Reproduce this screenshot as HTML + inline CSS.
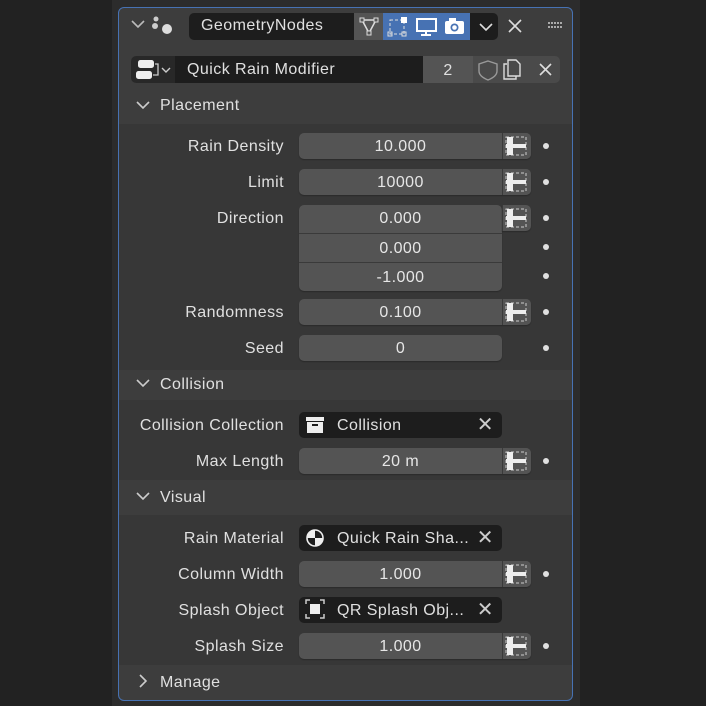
<!DOCTYPE html>
<html><head><style>
*{margin:0;padding:0;box-sizing:border-box}
body{width:706px;height:706px;background:#222;position:relative;overflow:hidden;font-family:"Liberation Sans","DejaVu Sans",sans-serif;font-size:16px;letter-spacing:0.45px;color:#e0e0e0}
.a{position:absolute}
.ed{left:112px;top:0;width:468px;height:706px;background:#2c2c2c}
.panel{left:118px;top:7px;width:455px;height:694px;background:#3d3d3d;border:1px solid #4772b3;border-radius:6px;overflow:hidden}
.body{background:#373737}
.lbl{text-align:right;width:190px;left:94px;color:#e0e0e0;margin-top:1px}
.fld{left:299px;width:232px;height:26px;background:#545454;border-radius:5px;text-align:center;line-height:28px;color:#e6e6e6;box-shadow:0 1px 1px #2a2a2a}
.fld span{display:block;width:203px}
.dec{position:absolute;left:203px;top:0;width:29px;height:26px;background:#545454;border-left:1px solid #3a3a3a;border-radius:0 5px 5px 0}
.dot{width:6px;height:6px;border-radius:3px;background:#e0e0e0;left:543px}
.obj{left:299px;width:203px;height:26px;background:#1d1d1d;border-radius:5px;line-height:28px;padding-left:38px}
.x{position:absolute;right:8px;top:0;color:#ccc;font-size:20px;line-height:26px}
</style></head><body>
<div class="a ed"></div>
<div class="a panel">
 <div class="a body" style="left:0;top:116px;width:100%;height:246px"></div>
 <div class="a body" style="left:0;top:392px;width:100%;height:80px"></div>
 <div class="a body" style="left:0;top:507px;width:100%;height:150px"></div>
</div>
<svg class="a" style="left:130px;top:14px" width="50" height="26"><path d="M2 7l6 6 6-6" stroke="#bbb" stroke-width="1.6" fill="none"/><circle cx="26" cy="5" r="2.5" fill="#ccc"/><circle cx="25" cy="12" r="3" fill="#ccc"/><circle cx="37" cy="15" r="5" fill="#ddd"/></svg>
<div class="a" style="left:189px;top:13px;width:309px;height:27px;background:#1d1d1d;border-radius:5px"></div>
<div class="a" style="left:201px;top:17px">GeometryNodes</div>
<div class="a" style="left:354px;top:13px;width:29px;height:27px;background:#545454"></div>
<div class="a" style="left:383px;top:13px;width:87px;height:27px;background:#4772b3"></div>
<svg class="a" style="left:354px;top:13px" width="116" height="27">
 <path d="M8 7h14l-7 13z" stroke="#ddd" stroke-width="1.5" fill="none"/><rect x="6" y="5" width="4" height="4" fill="#545454" stroke="#ddd"/><rect x="20" y="5" width="4" height="4" fill="#545454" stroke="#ddd"/><rect x="13" y="18" width="4" height="4" fill="#545454" stroke="#ddd"/>
 <rect x="36" y="7" width="14" height="14" fill="none" stroke="#ddd" stroke-dasharray="3 2"/><rect x="47" y="4" width="6" height="6" fill="#fff"/><rect x="34" y="19" width="4" height="4" fill="none" stroke="#ddd"/><rect x="48" y="19" width="4" height="4" fill="none" stroke="#ddd"/>
 <rect x="63" y="6" width="19" height="12" fill="none" stroke="#fff" stroke-width="2"/><path d="M72 18v4M67 22h10" stroke="#fff" stroke-width="2"/>
 <rect x="91" y="8" width="19" height="13" rx="2" fill="#fff"/><rect x="95" y="5" width="7" height="4" fill="#fff"/><circle cx="100.5" cy="14.5" r="4" fill="#4772b3"/><circle cx="100.5" cy="14.5" r="2.3" fill="#fff"/>
</svg>
<svg class="a" style="left:470px;top:13px" width="100" height="27"><path d="M10 11l6 6 6-6" stroke="#ddd" stroke-width="1.6" fill="none"/><path d="M39 7l12 12M51 7l-12 12" stroke="#ddd" stroke-width="1.6"/><g fill="#aaa"><rect x="78" y="9" width="2" height="2"/><rect x="81" y="9" width="2" height="2"/><rect x="84" y="9" width="2" height="2"/><rect x="87" y="9" width="2" height="2"/><rect x="90" y="9" width="2" height="2"/><rect x="78" y="13" width="2" height="2"/><rect x="81" y="13" width="2" height="2"/><rect x="84" y="13" width="2" height="2"/><rect x="87" y="13" width="2" height="2"/><rect x="90" y="13" width="2" height="2"/></g></svg>
<div class="a" style="left:131px;top:56px;width:429px;height:27px;background:#4a4a4a;border-radius:5px"></div>
<div class="a" style="left:131px;top:56px;width:44px;height:27px;background:#282828;border-radius:5px 0 0 5px"></div>
<div class="a" style="left:175px;top:56px;width:248px;height:27px;background:#1d1d1d"></div>
<div class="a" style="left:423px;top:56px;width:50px;height:27px;background:#545454;text-align:center;line-height:29px">2</div>
<div class="a" style="left:187px;top:61px">Quick Rain Modifier</div>
<svg class="a" style="left:131px;top:56px" width="44" height="27"><rect x="7" y="4" width="16" height="8" rx="2.5" fill="#eee"/><rect x="5" y="15" width="16" height="8" rx="2.5" fill="#eee"/><path d="M24 8h3v11h-5" stroke="#ccc" stroke-width="1.3" fill="none"/><path d="M31 12l4 4 4-4" stroke="#ccc" stroke-width="1.4" fill="none"/></svg>
<svg class="a" style="left:473px;top:56px" width="87" height="27"><path d="M15 5l9 3v7c0 4-4 7-9 9-5-2-9-5-9-9V8z" fill="none" stroke="#999" stroke-width="1.4"/><path d="M34 8h-3v15h12v-3M35 4h8l4 4v12H35z" fill="none" stroke="#ddd" stroke-width="1.4"/><path d="M67 8l11 11M78 8L67 19" stroke="#ddd" stroke-width="1.6"/></svg>
<svg class="a" style="left:136px;top:98px" width="16" height="600"><g stroke="#ccc" stroke-width="1.6" fill="none"><path d="M1 4l6 6 6-6"/><path d="M1 282l6 6 6-6"/><path d="M1 395l6 6 6-6"/><path d="M4 577l6 6-6 6"/></g></svg>
<div class="a" style="left:160px;top:97px">Placement</div>
<div class="a" style="left:160px;top:376px">Collision</div>
<div class="a" style="left:160px;top:489px">Visual</div>
<div class="a" style="left:160px;top:674px">Manage</div>
<div class="a lbl" style="top:137px">Rain Density</div>
<div class="a lbl" style="top:173px">Limit</div>
<div class="a lbl" style="top:209px">Direction</div>
<div class="a lbl" style="top:303px">Randomness</div>
<div class="a lbl" style="top:339px">Seed</div>
<div class="a lbl" style="top:416px;left:60px;width:224px">Collision Collection</div>
<div class="a lbl" style="top:452px">Max Length</div>
<div class="a lbl" style="top:529px">Rain Material</div>
<div class="a lbl" style="top:565px">Column Width</div>
<div class="a lbl" style="top:601px">Splash Object</div>
<div class="a lbl" style="top:637px">Splash Size</div>
<div class="a fld" style="top:133px"><span>10.000</span><div class="dec"></div></div>
<div class="a fld" style="top:169px"><span>10000</span><div class="dec"></div></div>
<div class="a fld" style="top:205px;width:203px;height:86px;border-radius:5px"><span style="height:29px;line-height:28px;border-bottom:1px solid #3a3a3a">0.000</span><span style="height:29px;line-height:30px;border-bottom:1px solid #3a3a3a">0.000</span><span style="line-height:30px">-1.000</span></div>
<div class="a fld" style="top:205px;left:502px;width:29px;border-radius:0 5px 5px 0;border-left:1px solid #3a3a3a"></div>
<div class="a fld" style="top:299px"><span>0.100</span><div class="dec"></div></div>
<div class="a fld" style="top:335px;width:203px"><span>0</span></div>
<div class="a obj" style="top:412px">Collision<span class="x">✕</span></div>
<div class="a fld" style="top:448px"><span>20 m</span><div class="dec"></div></div>
<div class="a obj" style="top:525px">Quick Rain Sha...<span class="x">✕</span></div>
<div class="a fld" style="top:561px"><span>1.000</span><div class="dec"></div></div>
<div class="a obj" style="top:597px">QR Splash Obj...<span class="x">✕</span></div>
<div class="a fld" style="top:633px"><span>1.000</span><div class="dec"></div></div>
<svg class="a" style="left:502px;top:133px" width="29" height="530"><defs><g id="k"><path d="M4 4h20v18H4z" fill="none" stroke="#ccc" stroke-dasharray="3 2"/><rect x="5" y="4" width="6" height="18" fill="#eee"/><rect x="4" y="11" width="20" height="4" fill="#eee"/></g></defs>
<use href="#k"/><use href="#k" y="36"/><use href="#k" y="72"/><use href="#k" y="166"/><use href="#k" y="315"/><use href="#k" y="428"/><use href="#k" y="500"/></svg>
<svg class="a" style="left:305px;top:414px" width="22" height="212"><rect x="1" y="3" width="18" height="4" fill="#eee"/><rect x="2" y="8" width="16" height="11" fill="#eee"/><rect x="7" y="10" width="6" height="2" fill="#1d1d1d"/>
<circle cx="10" cy="124" r="8" fill="none" stroke="#eee" stroke-width="1.6"/><path d="M10 116a8 8 0 0 0-8 8h8zM10 124h8a8 8 0 0 1-8 8z" fill="#eee"/>
<path d="M1 190v-4h4M15 186h4v4M19 200v4h-4M5 204H1v-4" stroke="#ccc" stroke-width="1.5" fill="none"/><rect x="5" y="190" width="10" height="10" fill="#eee"/></svg>
<div class="a dot" style="top:143px"></div><div class="a dot" style="top:179px"></div><div class="a dot" style="top:215px"></div><div class="a dot" style="top:244px"></div><div class="a dot" style="top:273px"></div><div class="a dot" style="top:309px"></div><div class="a dot" style="top:345px"></div><div class="a dot" style="top:458px"></div><div class="a dot" style="top:571px"></div><div class="a dot" style="top:643px"></div>
</body></html>
